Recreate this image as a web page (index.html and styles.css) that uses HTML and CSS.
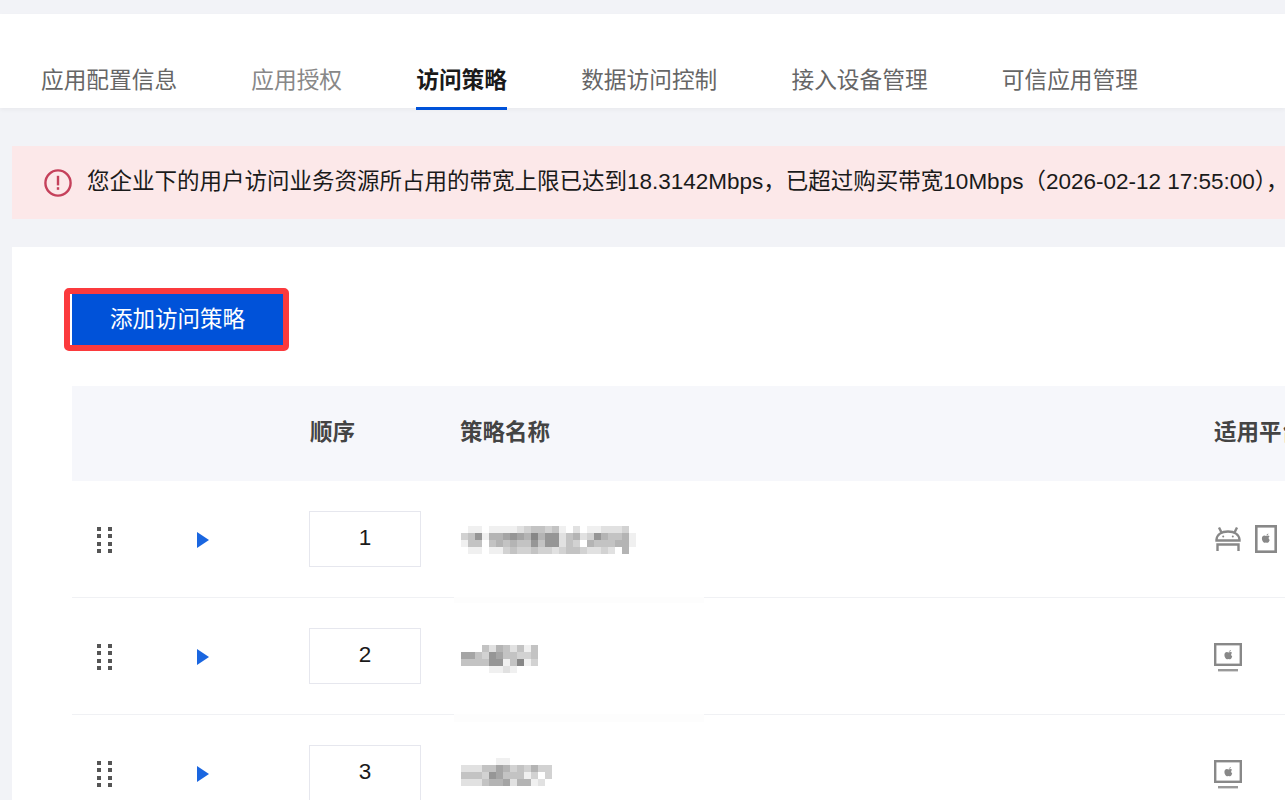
FILE: index.html
```html
<!DOCTYPE html>
<html lang="zh-CN">
<head>
    <meta charset="UTF-8">
    <meta name="viewport" content="width=device-width, initial-scale=1.0">
    <title>访问策略</title>
    <link rel="stylesheet" href="styles.css">
</head>
<body>
    <div class="tabs">
        <div class="tab">应用配置信息</div>
        <div class="tab muted">应用授权</div>
        <div class="tab active">访问策略</div>
        <div class="tab">数据访问控制</div>
        <div class="tab">接入设备管理</div>
        <div class="tab">可信应用管理</div>
    </div>

    <div class="alert">
        <svg class="alert-icon" width="28" height="28" viewBox="0 0 28 28">
            <circle cx="14" cy="14" r="12.6" fill="none" stroke="#c5415b" stroke-width="2.4"/>
            <rect x="12.8" y="6.8" width="2.4" height="9.6" fill="#c5415b"/>
            <rect x="12.8" y="18.2" width="2.4" height="2.6" fill="#c5415b"/>
        </svg>
        <span class="alert-text">您企业下的用户访问业务资源所占用的带宽上限已达到18.3142Mbps，已超过购买带宽10Mbps（2026-02-12 17:55:00），</span>
    </div>

    <div class="card">
        <div class="add-outline">
            <button class="add-button">添加访问策略</button>
        </div>

        <div class="table">
            <div class="row head">
                <div></div>
                <div></div>
                <div>顺序</div>
                <div>策略名称</div>
                <div>适用平台</div>
            </div>

            <div class="row">
                <div class="drag"><i></i><i></i><i></i><i></i><i></i><i></i><i></i><i></i></div>
                <div class="arrow"></div>
                <div><div class="order">1</div></div>
                <div class="name">
                    <svg class="mosaic first" data-rows="0110111123443410201122230,3471556765857724523754451,1440454544747724305444551,0110113433433234432232050"></svg>
                </div>
                <div class="platforms">
                    <svg width="28" height="28" viewBox="0 0 28 28" fill="none" stroke="#888" stroke-width="2.4">
                        <path d="M2.5 14.5C3 9.5 7.5 6.5 14 6.5s11 3 11.5 8v1H2.5z"/>
                        <path d="M7.5 7.5L5 2.5M20.5 7.5L23 2.5"/>
                        <path d="M3.5 26v-6.5h21V26"/>
                        <circle cx="9.2" cy="11.6" r="1" fill="#888" stroke="none"/>
                        <circle cx="18.8" cy="11.6" r="1" fill="#888" stroke="none"/>
                    </svg>
                    <svg width="22" height="28" viewBox="0 0 22 28" fill="none">
                        <rect x="1.3" y="1.3" width="19.4" height="25.4" stroke="#888" stroke-width="2.6"/>
                        <path class="apple" d="M11.2 10.2c.8-1 1.4-1.5 2.2-1.7 0 1.1-.7 1.8-2.2 1.7zM14.4 11.6c-1 .6-1.2 2.5.3 3.4-.5 1.5-1.3 2.8-2.1 2.8-.7 0-1-.4-1.7-.4s-1 .4-1.6.4c-1 0-2.4-2.2-2.4-4.2 0-1.9 1.2-3 2.5-3 .7 0 1.2.4 1.6.4s1-.5 1.9-.5c.7 0 1.2.3 1.5.6z"/>
                    </svg>
                </div>
            </div>

            <div class="row">
                <div class="drag"><i></i><i></i><i></i><i></i><i></i><i></i><i></i><i></i></div>
                <div class="arrow"></div>
                <div><div class="order">2</div></div>
                <div class="name">
                    <div class="patch"></div>
                    <svg class="mosaic second" data-rows="00042542414,66437644334,44447714813,00001121000"></svg>
                </div>
                <div class="platforms">
                    <svg class="monitor" width="28" height="30" viewBox="0 0 28 30" fill="none">
                        <rect x="1.2" y="1.2" width="25.6" height="20.6" stroke="#888" stroke-width="2.4"/>
                        <rect x="4" y="26" width="20" height="2.4" fill="#999"/>
                        <path class="apple" transform="translate(3.5 -1.5)" d="M11.2 10.2c.8-1 1.4-1.5 2.2-1.7 0 1.1-.7 1.8-2.2 1.7zM14.4 11.6c-1 .6-1.2 2.5.3 3.4-.5 1.5-1.3 2.8-2.1 2.8-.7 0-1-.4-1.7-.4s-1 .4-1.6.4c-1 0-2.4-2.2-2.4-4.2 0-1.9 1.2-3 2.5-3 .7 0 1.2.4 1.6.4s1-.5 1.9-.5c.7 0 1.2.3 1.5.6z"/>
                    </svg>
                </div>
            </div>

            <div class="row">
                <div class="drag"><i></i><i></i><i></i><i></i><i></i><i></i><i></i><i></i></div>
                <div class="arrow"></div>
                <div><div class="order">3</div></div>
                <div class="name">
                    <div class="patch tall"></div>
                    <svg class="mosaic third" data-rows="0000011000000,2224465343533,4443764441303,2224556255120"></svg>
                </div>
                <div class="platforms">
                    <svg class="monitor" width="28" height="30" viewBox="0 0 28 30" fill="none">
                        <rect x="1.2" y="1.2" width="25.6" height="20.6" stroke="#888" stroke-width="2.4"/>
                        <rect x="4" y="26" width="20" height="2.4" fill="#999"/>
                        <path class="apple" transform="translate(3.5 -1.5)" d="M11.2 10.2c.8-1 1.4-1.5 2.2-1.7 0 1.1-.7 1.8-2.2 1.7zM14.4 11.6c-1 .6-1.2 2.5.3 3.4-.5 1.5-1.3 2.8-2.1 2.8-.7 0-1-.4-1.7-.4s-1 .4-1.6.4c-1 0-2.4-2.2-2.4-4.2 0-1.9 1.2-3 2.5-3 .7 0 1.2.4 1.6.4s1-.5 1.9-.5c.7 0 1.2.3 1.5.6z"/>
                    </svg>
                </div>
            </div>
        </div>
    </div>

    <script>
        // redacted policy names: each digit is one 7px block, higher is darker
        document.querySelectorAll(".mosaic").forEach(svg => {
            const rows = svg.dataset.rows.split(",");
            const size = 7;
            svg.setAttribute("width", rows[0].length * size);
            svg.setAttribute("height", rows.length * size);
            rows.forEach((row, y) => {
                [...row].forEach((level, x) => {
                    const gray = 255 - Number(level) * 15;
                    const rect = document.createElementNS("http://www.w3.org/2000/svg", "rect");
                    rect.setAttribute("x", x * size);
                    rect.setAttribute("y", y * size);
                    rect.setAttribute("width", size);
                    rect.setAttribute("height", size);
                    rect.setAttribute("fill", `rgb(${gray},${gray},${gray})`);
                    svg.appendChild(rect);
                });
            });
        });
    </script>
</body>
</html>
```

FILE: styles.css
```css
html {
    height: 100%;
    overflow: hidden;
}
body {
    font-family: "Liberation Sans", "Noto Sans CJK SC", sans-serif;
    font-size: 22.5px;
    background-color: #f2f3f7;
    margin: 0;
    padding-top: 14px;
    height: 786px;
    overflow: hidden;
}
.tabs {
    display: flex;
    gap: 74.2px;
    height: 94px;
    padding-left: 41px;
    background: #fff;
    box-shadow: 0 2px 4px rgba(0, 0, 0, 0.04);
    font-size: 22.7px;
}
.tab {
    height: 32px;
    line-height: 32px;
    padding-top: 50px;
    padding-bottom: 11px;
    border-bottom: 3px solid transparent;
    color: #666;
    white-space: nowrap;
}
.tab.muted {
    color: #888;
}
.tab.active {
    color: #1a1a1a;
    font-weight: bold;
    border-bottom-color: #0052d9;
}
.alert {
    display: flex;
    align-items: center;
    gap: 15px;
    height: 73px;
    margin: 38px 0 0 12px;
    padding-left: 32px;
    background: #fce8e9;
    color: #1a1a1a;
    white-space: nowrap;
    overflow: hidden;
}
.alert-icon {
    flex-shrink: 0;
}
.alert-text {
    margin-bottom: 8px;
}
.card {
    box-sizing: border-box;
    height: 553px;
    margin: 28px 0 0 12px;
    padding: 41px 0 0 52px;
    background: #fff;
    overflow: hidden;
}
.add-outline {
    width: 213px;
    height: 51px;
    border: 6px solid #fb3a3d;
    border-radius: 5px;
    background: #fff;
}
.add-button {
    display: block;
    width: 211px;
    height: 51px;
    margin-left: 2px;
    padding: 0 0 6px;
    border: none;
    background: #0052d9;
    color: #fff;
    font: inherit;
}
.table {
    width: 1400px;
    margin: 35px 0 0 8px;
}
.row {
    display: grid;
    grid-template-columns: 125px 113px 150px 754px 1fr;
    align-items: center;
    height: 116px;
    border-bottom: 1px solid #f0f1f4;
}
.row.head {
    height: 95px;
    border-bottom: none;
    background: #f6f7fb;
    color: #444;
    font-weight: bold;
}
.row.head div {
    padding-bottom: 8px;
}
.drag {
    display: grid;
    grid-template-columns: 4px 4px;
    column-gap: 7px;
    row-gap: 3.5px;
    width: 15px;
    margin: 2px 0 0 25px;
}
.drag i {
    height: 4px;
    background: #555;
}
.arrow {
    width: 0;
    height: 0;
    margin-top: 2px;
    border-left: 12px solid #1a66e0;
    border-top: 8px solid transparent;
    border-bottom: 8px solid transparent;
}
.order {
    width: 110px;
    height: 54px;
    margin-left: -1px;
    border: 1px solid #e6e7ee;
    line-height: 52px;
    text-align: center;
    color: #1a1a1a;
}
.name {
    position: relative;
    align-self: stretch;
    display: flex;
    align-items: center;
    padding-left: 1px;
}
.mosaic {
    display: block;
}
.mosaic.first {
    margin-top: 2px;
}
.mosaic.second {
    margin-top: 5px;
}
.mosaic.third {
    margin-top: -3px;
}
/* leftover of the redaction box, it hides the row line above the name */
.patch {
    position: absolute;
    top: -1px;
    left: -6px;
    width: 250px;
    height: 6px;
    background: #fdfdfd;
}
.patch.tall {
    height: 8px;
}
.platforms {
    display: flex;
    align-items: center;
    gap: 13px;
}
.apple {
    fill: #888;
}
.monitor {
    margin-top: 4px;
}
```
